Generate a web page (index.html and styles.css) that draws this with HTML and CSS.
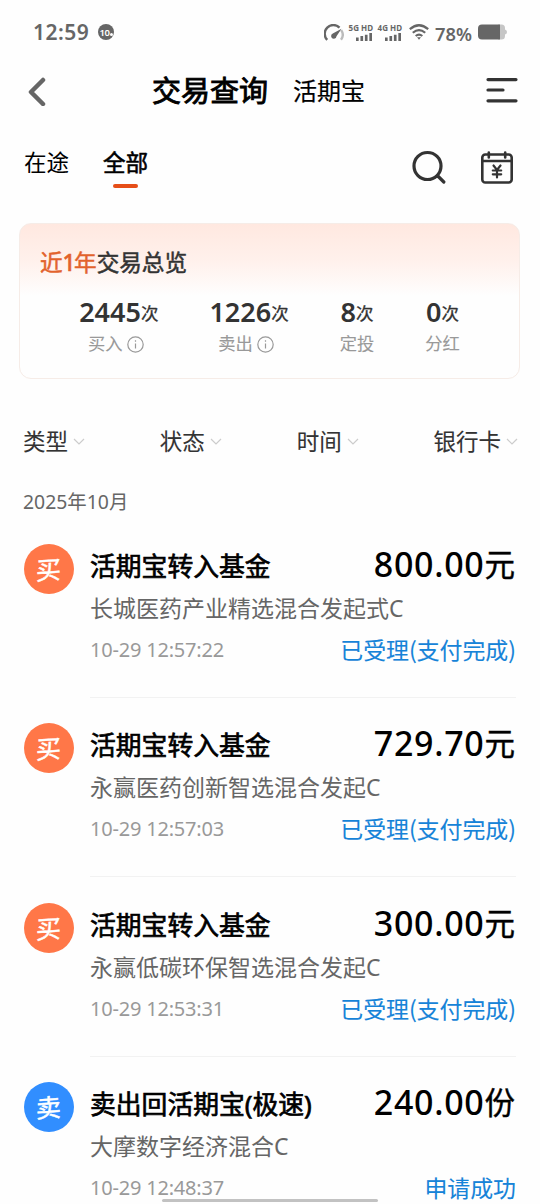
FILE: index.html
```html
<!DOCTYPE html>
<html lang="zh-CN">
<head>
    <meta charset="UTF-8">
    <meta name="viewport" content="width=device-width, initial-scale=1.0">
    <title>交易查询</title>
    <link rel="stylesheet" href="styles.css">
</head>
<body>
    <div class="screen">
        <!-- Status bar -->
        <div class="status-bar">
            <span class="clock">12:59</span>
            <span class="notice-count">10<i></i></span>
            <div class="status-icons">
                <svg class="gauge" width="20" height="17" viewBox="0 0 20 17" fill="none" stroke-width="2.4">
                    <path d="M3.200 15.800A8.300 8.300 0 0 1 15.500 3.600" stroke="#666"/>
                    <path d="M17.200 6.200A8.300 8.300 0 0 1 17 15.800" stroke="#bbb"/>
                    <path d="M17.500 4.800L12.500 12.200A2.700 2.700 0 1 1 8.800 9.600Z" fill="#666"/>
                </svg>
                <div class="signal">
                    <span>5G HD</span>
                    <svg width="18" height="9" viewBox="0 0 18 9" fill="#666"><path d="M0 5h3v4H0zM5 3.500h3V9H5zM10 2h3v7h-3zM15 0h3v9h-3z"/></svg>
                </div>
                <div class="signal">
                    <span>4G HD</span>
                    <svg width="18" height="9" viewBox="0 0 18 9" fill="#666"><path d="M0 5h3v4H0zM5 3.500h3V9H5zM10 2h3v7h-3zM15 0h3v9h-3z"/></svg>
                </div>
                <svg class="wifi" width="20" height="16" viewBox="0 0 20 16" fill="none" stroke="#666" stroke-width="2.200">
                    <path d="M.8 5.200Q10-2.700 19.200 5.200M3.800 8.800Q10 3.300 16.200 8.800M6.700 12Q10 9.200 13.300 12"/>
                    <path d="M8 13.200h4L10 15.800z" fill="#666" stroke="none"/>
                </svg>
                <span class="battery-text">78%</span>
                <svg class="battery" width="30" height="16" viewBox="0 0 30 16">
                    <path d="M20 .5h3.500Q27 .5 27 4v1.500q2 .5 2 2.500t-2 2.500V12q0 3.500-3.500 3.500H20z" fill="#c6c6c6"/>
                    <path d="M4 .5h18v15H4Q0 15.500 0 11.500V4.500Q0 .5 4 .5z" fill="#666"/>
                </svg>
            </div>
        </div>

        <!-- Header -->
        <header class="header">
            <svg class="back" width="18" height="30" viewBox="0 0 18 30" fill="none" stroke="#666" stroke-width="4.500" stroke-linecap="round" stroke-linejoin="round">
                <path d="M15 4L3 16l12 12"/>
            </svg>
            <h1>交易查询</h1>
            <span class="header-sub">活期宝</span>
            <svg class="menu" width="32" height="26" viewBox="0 0 32 26" stroke="#333" stroke-width="3.200" stroke-linecap="round">
                <path d="M2 1.600h28M2 12h15M2 22.800h28"/>
            </svg>
        </header>

        <!-- Tabs -->
        <nav class="tabs">
            <span class="tab">在途</span>
            <span class="tab active">全部</span>
            <div class="tab-icons">
                <svg width="34" height="34" viewBox="0 0 34 34" fill="none" stroke="#333" stroke-width="3.200" stroke-linecap="round">
                    <circle cx="15.500" cy="16" r="13.500"/>
                    <path d="M25.800 26l6 6"/>
                </svg>
                <svg width="34" height="34" viewBox="0 0 34 34" fill="none" stroke="#333" stroke-width="2.600" stroke-linecap="round">
                    <rect x="2.300" y="4.500" width="29.400" height="28" rx="3"/>
                    <path d="M2.500 11h29M8.800 2.500v5M25.200 2.500v5"/>
                    <path d="M13.500 15.500l3.500 4.500 3.500-4.500M17 20V27.500M12.800 20.500h8.400M12.800 24.300h8.400" stroke-width="2.200"/>
                </svg>
            </div>
        </nav>

        <!-- Summary card -->
        <section class="summary">
            <h2><em>近<b>1</b>年</em>交易总览</h2>
            <div class="stats">
                <div class="stat">
                    <div class="stat-value">2445<small>次</small></div>
                    <div class="stat-label">买入<svg class="info" viewBox="0 0 17 17"><circle cx="8.500" cy="8.500" r="7.700"/><path d="M8.500 7.500v5M8.500 4.300v1.500"/></svg></div>
                </div>
                <div class="stat">
                    <div class="stat-value">1226<small>次</small></div>
                    <div class="stat-label">卖出<svg class="info" viewBox="0 0 17 17"><circle cx="8.500" cy="8.500" r="7.700"/><path d="M8.500 7.500v5M8.500 4.300v1.500"/></svg></div>
                </div>
                <div class="stat">
                    <div class="stat-value">8<small>次</small></div>
                    <div class="stat-label">定投</div>
                </div>
                <div class="stat">
                    <div class="stat-value">0<small>次</small></div>
                    <div class="stat-label">分红</div>
                </div>
            </div>
        </section>

        <!-- Filters -->
        <div class="filters">
            <span class="filter">类型<svg viewBox="0 0 12 8"><path d="M1 1l5 5 5-5"/></svg></span>
            <span class="filter">状态<svg viewBox="0 0 12 8"><path d="M1 1l5 5 5-5"/></svg></span>
            <span class="filter">时间<svg viewBox="0 0 12 8"><path d="M1 1l5 5 5-5"/></svg></span>
            <span class="filter">银行卡<svg viewBox="0 0 12 8"><path d="M1 1l5 5 5-5"/></svg></span>
        </div>

        <div class="month">2025年10月</div>

        <!-- Transactions -->
        <div class="list">
            <div class="item">
                <div class="badge buy"><span>买</span></div>
                <div class="item-body">
                    <div class="item-top">
                        <span class="item-title">活期宝转入基金</span>
                        <span class="amount">800.00<small>元</small></span>
                    </div>
                    <div class="fund">长城医药产业精选混合发起式C</div>
                    <div class="item-bottom">
                        <span class="time">10-29 12:57:22</span>
                        <span class="state">已受理(支付完成)</span>
                    </div>
                </div>
            </div>
            <div class="item">
                <div class="badge buy"><span>买</span></div>
                <div class="item-body">
                    <div class="item-top">
                        <span class="item-title">活期宝转入基金</span>
                        <span class="amount">729.70<small>元</small></span>
                    </div>
                    <div class="fund">永赢医药创新智选混合发起C</div>
                    <div class="item-bottom">
                        <span class="time">10-29 12:57:03</span>
                        <span class="state">已受理(支付完成)</span>
                    </div>
                </div>
            </div>
            <div class="item">
                <div class="badge buy"><span>买</span></div>
                <div class="item-body">
                    <div class="item-top">
                        <span class="item-title">活期宝转入基金</span>
                        <span class="amount">300.00<small>元</small></span>
                    </div>
                    <div class="fund">永赢低碳环保智选混合发起C</div>
                    <div class="item-bottom">
                        <span class="time">10-29 12:53:31</span>
                        <span class="state">已受理(支付完成)</span>
                    </div>
                </div>
            </div>
            <div class="item">
                <div class="badge sell"><span>卖</span></div>
                <div class="item-body">
                    <div class="item-top">
                        <span class="item-title">卖出回活期宝(极速)</span>
                        <span class="amount">240.00<small>份</small></span>
                    </div>
                    <div class="fund">大摩数字经济混合C</div>
                    <div class="item-bottom">
                        <span class="time">10-29 12:48:37</span>
                        <span class="state">申请成功</span>
                    </div>
                </div>
            </div>
        </div>

        <div class="home-bar"></div>
    </div>
</body>
</html>
```
FILE: styles.css
```css
* {
    margin: 0;
    padding: 0;
    box-sizing: border-box;
}

body {
    background-color: #fefefe;
    font-family: "Noto Sans", "Noto Sans CJK SC", sans-serif;
    color: #000;
}

svg {
    display: block;
    flex-shrink: 0;
}

.screen {
    position: relative;
    width: 540px;
    height: 1204px;
    overflow: hidden;
}

/* Status bar */
.status-bar {
    display: flex;
    align-items: center;
    height: 64px;
    padding: 0 32px 0 33px;
    color: #666;
}

.clock {
    width: 65px;
    font-size: 21px;
    font-weight: 600;
    letter-spacing: 0.5px;
    line-height: 64px;
}

.notice-count {
    display: flex;
    align-items: center;
    justify-content: center;
    width: 16px;
    height: 16px;
    border-radius: 50%;
    background-color: #666;
    color: #fff;
    font-size: 9.5px;
    font-weight: 600;
    letter-spacing: -0.4px;
}

.notice-count i {
    width: 3px;
    height: 3px;
    margin-top: 4px;
    border-radius: 50%;
    background-color: #fff;
}

.status-icons {
    display: flex;
    align-items: center;
    margin-left: auto;
}

.gauge {
    margin-right: 5px;
}

.signal {
    display: flex;
    flex-direction: column;
    align-items: flex-end;
    width: 24px;
    margin-right: 5px;
    gap: 1px;
}

.signal span {
    font-size: 8px;
    font-weight: 700;
    line-height: 8px;
    white-space: nowrap;
}

.signal svg {
    height: 8px;
}

.wifi {
    margin: 0 6px 0 2px;
}

.battery-text {
    width: 43px;
    font-size: 18.3px;
    font-weight: 600;
    line-height: 24px;
    padding-top: 3px;
}

/* Header */
.header {
    display: flex;
    align-items: center;
    height: 54px;
    padding: 0 22px 0 28px;
}

.header h1 {
    margin-left: 106px;
    font-size: 29px;
    font-weight: 400;
    line-height: 54px;
    -webkit-text-stroke: 0.9px #000;
}

.header-sub {
    margin-left: 25px;
    font-size: 24px;
    line-height: 54px;
    -webkit-text-stroke: 0.2px #000;
}

.menu {
    margin-left: auto;
}

/* Tabs */
.tabs {
    display: flex;
    height: 105px;
    padding: 24px 26px 0 24px;
}

.tab {
    margin-right: 34px;
    font-size: 22.5px;
    line-height: 42px;
}

.tab.active {
    -webkit-text-stroke: 0.6px #000;
}

.tab.active::after {
    content: "";
    display: block;
    width: 25px;
    height: 4px;
    margin: 0 auto;
    border-radius: 2px;
    background-color: #e64e18;
}

.tab-icons {
    display: flex;
    gap: 34px;
    margin: 8px 0 0 auto;
}

/* Summary card */
.summary {
    height: 156px;
    margin: 0 20px 0 19px;
    padding-top: 21px;
    border: 1px solid #f6ece7;
    border-radius: 12px;
    background: linear-gradient(#ffe8e0 0, #fff1ec 38px, #fefefe 72px);
}

.summary h2 {
    padding-left: 20px;
    font-size: 22.6px;
    font-weight: 400;
    line-height: 36px;
    color: #333;
    -webkit-text-stroke: 0.5px;
}

.summary em {
    font-style: normal;
    color: #e2622c;
}

.summary b {
    font-weight: 500;
    letter-spacing: -1.5px;
}

.stats {
    display: flex;
    justify-content: center;
    gap: 51px;
    margin-top: 13px;
}

.stat {
    display: flex;
    flex-direction: column;
    align-items: center;
    color: #333;
}

.stat-value {
    font-size: 27px;
    font-weight: 600;
    line-height: 36px;
}

.stat-value small {
    font-size: 17.5px;
    font-weight: 400;
    vertical-align: 2px;
    -webkit-text-stroke: 0.3px;
}

.stat-label {
    display: flex;
    align-items: center;
    font-size: 17.3px;
    line-height: 26px;
    color: #999;
    -webkit-text-stroke: 0.1px;
}

.info {
    width: 17px;
    height: 17px;
    margin: 0 6px 0 4px;
    fill: none;
    stroke: #999;
    stroke-width: 1.2;
}

/* Filters */
.filters {
    display: flex;
    justify-content: space-between;
    margin-top: 45px;
    padding: 0 22px 0 23px;
}

.filter {
    display: flex;
    align-items: center;
    font-size: 22.5px;
    line-height: 36px;
    color: #333;
    -webkit-text-stroke: 0.1px;
}

.filter svg {
    width: 12px;
    height: 8px;
    margin-left: 5px;
    fill: none;
    stroke: #ccc;
    stroke-width: 1.2;
}

.month {
    height: 58px;
    padding-left: 23px;
    font-size: 19.4px;
    line-height: 83px;
    color: #666;
}

/* Transactions */
.item {
    display: flex;
    height: 179.6px;
    padding: 24.5px 24px 0;
}

.badge {
    display: flex;
    align-items: center;
    justify-content: center;
    width: 50px;
    height: 50px;
    margin: 1px 16px 0 0;
    border-radius: 50%;
    color: #fff;
    font-size: 25px;
    line-height: 48px;
}

.badge span {
    transform: rotate(-4deg) skewX(-4deg);
    -webkit-text-stroke: 0.5px;
}

.buy {
    background-color: #ff7748;
}

.sell {
    background-color: #318eff;
}

.item-body {
    flex: 1;
    border-bottom: 1px solid #f2f2f2;
}

.item-top,
.item-bottom {
    display: flex;
    justify-content: space-between;
}

.item-title {
    font-size: 25.8px;
    line-height: 46px;
    white-space: nowrap;
    -webkit-text-stroke: 0.7px;
}

.amount {
    padding-right: 1px;
    font-size: 34px;
    font-weight: 500;
    letter-spacing: 0.7px;
    line-height: 42px;
    white-space: nowrap;
}

.amount small {
    font-size: 30.5px;
    font-weight: 400;
    letter-spacing: 0;
    vertical-align: 1px;
    -webkit-text-stroke: 0.4px;
}

.fund {
    font-size: 23px;
    line-height: 39px;
    color: #666;
}

.time {
    font-size: 20px;
    letter-spacing: -0.2px;
    line-height: 44px;
    color: #999;
}

.state {
    font-family: "Noto Sans CJK SC", sans-serif;
    font-size: 22.9px;
    line-height: 43px;
    color: #1683d8;
    -webkit-text-stroke: 0.1px;
}

.home-bar {
    position: absolute;
    left: 162px;
    bottom: 2px;
    width: 216px;
    height: 3px;
    border-radius: 2px;
    background-color: #c2c2c2;
}
```
